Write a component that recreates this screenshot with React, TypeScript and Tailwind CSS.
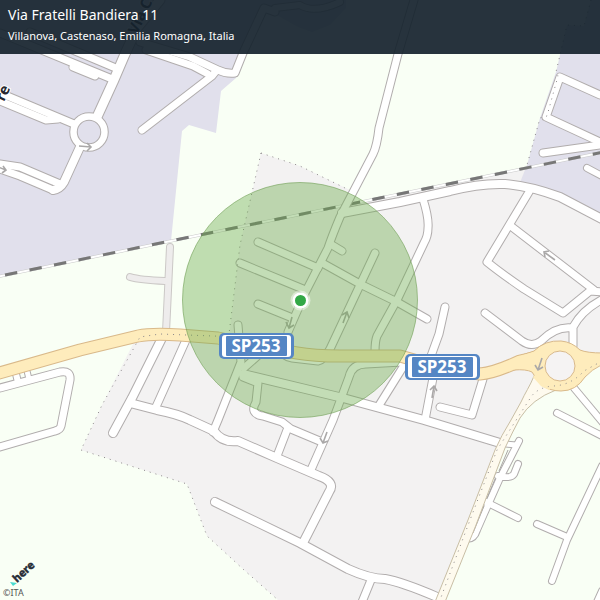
import React from "react";

type Road = { d: string; w?: number };

const streets: Road[] = [
  // north-west district
  { d: "M160 0 L137 28 L125 54 L113 82 L97 117", w: 9 },
  { d: "M0 93 L74 124", w: 7 },
  { d: "M0 101 L46 120 L58 119", w: 7 },
  { d: "M0 164 L20 167 L60 184", w: 7 },
  { d: "M0 169 L20 176 L53 190", w: 7 },
  { d: "M80 147 L64 182 Q60 189 53 190", w: 8 },
  { d: "M0 33 L112 79", w: 7 },
  { d: "M30 32 L118 69", w: 7 },
  { d: "M73 67 L95 76", w: 7 },
  { d: "M140 42 L190 57 L218 70 Q226 74 235 73 L243 53 L264 8 L275 12", w: 7 },
  { d: "M146 50 L193 66 L208 74", w: 7 },
  { d: "M216 71 L212 76 L142 130", w: 7 },
  { d: "M275 8 Q292 6 300 5 Q314 14 340 2", w: 6 },
  // north-east district
  { d: "M600 95 L560 77 L546 117 L600 142", w: 7 },
  { d: "M543 153 L600 145", w: 7 },
  { d: "M587 168 L602 176", w: 6 },
  { d: "M342 213 L400 202 L450 191 Q480 183 505 184 Q530 186 560 197 L602 219", w: 8 },
  { d: "M423 199 Q429 218 428 228 Q428 236 424 243 L398 298 L377 336 Q375 341 375 352", w: 7 },
  { d: "M529 192 L508 227 L487 262 Q502 274 524 289 L563 313 L590 291 L604 292", w: 7 },
  { d: "M512 227 L594 290", w: 7 },
  { d: "M485 313 L522 341 Q532 348 541 341 Q556 326 572 328", w: 7 },
  { d: "M573 346 L573 327 Q582 310 603 299", w: 7 },
  // town centre
  { d: "M414 0 L398 54 L379 128 Q377 146 373 154 L340 217 Q332 236 328 248 L305 293 L288 332", w: 7 },
  { d: "M258 242 L318 268", w: 7 },
  { d: "M324 264 L360 284 L397 302 L427 319", w: 7 },
  { d: "M240 263 L303 289", w: 7 },
  { d: "M258 304 L290 317", w: 7 },
  { d: "M332 245 L342 251", w: 7 },
  { d: "M375 253 L360 285 L330 349 Q324 360 318 361 L292 358 Q284 357 283 350", w: 7 },
  { d: "M238 325 L241 362 L218 420 L213 432", w: 7 },
  { d: "M262 352 L244 368", w: 7 },
  { d: "M243 374 L343 398 L424 420 L500 443", w: 8 },
  { d: "M243 377 L258 383 L256 402 Q249 414 263 416 L282 422 L291 429 L322 442", w: 7 },
  { d: "M402 362 L366 364 Q352 364 349 377 L333 420 L310 472", w: 7 },
  { d: "M403 367 L378 407", w: 7 },
  { d: "M445 307 L439 334 L431 356", w: 7 },
  { d: "M433 378 L425 420", w: 7 },
  { d: "M483 379 L472 415 L440 407", w: 7 },
  { d: "M162 338 L132 398 L113 433", w: 8 },
  { d: "M186 340 L160 398 L155 409", w: 7 },
  { d: "M130 403 L157 410 Q178 414 190 420 L214 431 Q222 443 238 441 L277 458 L319 476 Q336 482 329 492 L303 543", w: 8 },
  { d: "M287 430 L277 456", w: 7 },
  { d: "M215 502 L300 543 L348 569 Q370 579 385 579 Q402 582 437 597", w: 8 },
  { d: "M371 580 L362 602", w: 7 },
  // south-west loop
  { d: "M0 388 L60 372 Q71 370 70 380 L61 426 Q60 430 55 431 L0 447", w: 7 },
  { d: "M16 374 L18 382", w: 6 },
  { d: "M27 371 L29 379", w: 5 },
  // south-east lanes
  { d: "M519 441 L500 478 L484 514 L477 530 Q474 540 465 539", w: 6 },
  { d: "M518 464 L514 474 Q511 479 498 476", w: 6 },
  { d: "M486 502 L518 518", w: 6 },
  { d: "M506 444 L516 445", w: 5 },
  { d: "M537 524 L567 537", w: 6 },
  { d: "M602 466 L567 540 L552 581", w: 6 },
  { d: "M557 413 L604 437", w: 6 },
  { d: "M574 388 L604 424", w: 6 },
  { d: "M602 591 L597 602", w: 6 },
];

const serviceLanes: Road[] = [
  { d: "M170 247 L168 290 L166 332", w: 6 },
  { d: "M130 277 Q140 280 165 281", w: 6 },
];

const provincial =
  "M-4 374 L80 350 L138 336 Q152 333 180 335 L218 338 L262 347 L297 353 Q314 356 340 356 L400 356 L442 368 L480 374 Q494 373 520 361 L542 356";

const roundabout =
  "M516 357 L534 351 Q545 340 561 341 Q572 342 580 350 Q587 353 603 353 V364 Q591 370 585 377 Q576 391 561 391 Q549 391 540 384 L532 372 Q526 369 514 370";

const districtEdges = [
  "M261 153 L300 166 L347 189",
  "M261 153 L240 245 L229 334",
  "M240 337 L160 334 L140 337 L102 405 L81 450 L187 484 L207 536 L244 570 L278 600",
  "M591 0 L584 26 L567 25 L556 72 L558 76 L547 116 L540 118 L527 165",
  "M602 361 L584 371 Q570 386 552 386 Q537 388 531 397 L513 425 L497 450 L470 520 L440 600",
];

const arrows = [
  "M79 146 L91 147 M87 143 L91 147 L87 151",
  "M-2 167 L6 170 M3 166 L6 170 L2 173",
  "M292 317 L289 328 M286 322 L289 328 L294 325",
  "M343 323 L347 312 M342 315 L347 312 L349 318",
  "M327 432 L323 443 M320 438 L323 443 L328 441",
  "M432 398 L434 386 M430 390 L434 386 L437 391",
  "M555 260 L544 252 M549 251 L544 252 L545 257",
  "M542 358 L538 370 M535 365 L538 370 L543 367",
];

function RoadLayer({ roads, edge, fill }: { roads: Road[]; edge: string; fill: string }) {
  return (
    <g fill="none" strokeLinecap="round" strokeLinejoin="round">
      {roads.map((r) => (
        <path key={r.d} d={r.d} stroke={edge} strokeWidth={(r.w ?? 7) + 2} />
      ))}
      {roads.map((r) => (
        <path key={r.d} d={r.d} stroke={fill} strokeWidth={r.w ?? 7} />
      ))}
    </g>
  );
}

function RoadShield({ x, y, label }: { x: number; y: number; label: string }) {
  return (
    <g>
      <rect x={x - 37} y={y - 13} width="75" height="26" rx="5" fill="#5586c4" />
      <rect x={x - 34} y={y - 11} width="69" height="22" rx="3" fill="#fff" />
      <rect x={x - 30} y={y - 10} width="61" height="20" rx="1" fill="#5586c4" />
      <text x={x} y={y + 6} textAnchor="middle" fill="#fff" className="font-['Noto_Sans',sans-serif] text-[17px] font-bold">
        {label}
      </text>
    </g>
  );
}

function StreetMap() {
  return (
    <svg viewBox="0 0 600 600" className="block h-auto w-full" role="img" aria-label="Via Fratelli Bandiera 11">
      <rect width="600" height="600" fill="#f9fff5" />
      <path d="M0 0 H346 V8 L330 25 L312 32 L298 27 L275 14 L264 12 L236 78 L221 91 L216 133 L189 125 L182 131 L171 241 L0 276 Z" fill="#e1e0ec" />
      <path d="M261 153 L300 166 L350 190 L356 203 L522 168 L600 185 V362 H580 L530 397 L497 450 L440 600 H278 L244 570 L207 536 L187 484 L81 450 L102 405 L135 340 L229 337 L240 245 Z" fill="#f3f2f2" />
      <path d="M591 0 L584 26 L567 25 L556 72 L540 118 L527 165 L519 185 L560 195 L600 217 V0 Z" fill="#e1e0ec" />

      <RoadLayer roads={serviceLanes} edge="#cbc8c6" fill="#eeecec" />

      <path d="M-4 277 L604 152" stroke="#c9c9c9" strokeWidth="3" />
      <path d="M-4 277 L604 152" stroke="#fff" strokeWidth="2" />
      <path d="M5 275 L604 152" stroke="#777" strokeWidth="3" strokeDasharray="12.5 12.5" />

      <circle cx="89" cy="132" r="15.5" fill="none" stroke="#b1adad" strokeWidth="8.5" />
      <RoadLayer roads={streets} edge="#b1adad" fill="#fff" />
      <circle cx="89" cy="132" r="15.5" fill="none" stroke="#fff" strokeWidth="6.5" />
      <path d="M508 450 L499 471 M495 479 L487 498 M484 506 L473 533" stroke="#aaa6a6" strokeWidth="1" />

      <path d="M534 376 C530 386 525 393 521 402 L511 420 Q501 436 495 450 L468 520 L435 602 L445 602 L476 525 L505 448 Q513 431 520 418 Q532 399 556 390 L541 365 Z" fill="#fefaee" stroke="#c8bea5" strokeWidth="1" />

      <g fill="none" strokeLinejoin="round">
        <path d={provincial} stroke="#d9b98a" strokeWidth="13" />
        <path d={roundabout} fill="#feecbc" stroke="#d9b98a" />
        <path d={provincial} stroke="#feecbc" strokeWidth="11" />
        <path d="M534 376 L542 385 L550 389" stroke="#feecbc" strokeWidth="3" />
      </g>
      <circle cx="560" cy="366" r="15" fill="#f5f3f3" stroke="#d9b98a" />

      <g fill="none" stroke="#8b8789" strokeWidth="1" strokeDasharray="1 5">
        {districtEdges.map((d) => (
          <path key={d} d={d} />
        ))}
      </g>

      <g fill="none" stroke="#aaa8a8" strokeWidth="1.6">
        {arrows.map((d) => (
          <path key={d} d={d} />
        ))}
      </g>

      <g fill="#26282f" stroke="#fff" strokeWidth="2" paintOrder="stroke" className="font-['Noto_Sans',sans-serif] text-[15px] font-bold">
        <text transform="translate(137 35) rotate(-65)">Via C</text>
        <text transform="translate(4 102) rotate(-65)">re</text>
      </g>

      <circle cx="300" cy="300" r="117.5" fill="#6aaa48" fillOpacity="0.4" stroke="#6f9f55" strokeOpacity="0.6" />

      <RoadShield x={256} y={346} label="SP253" />
      <RoadShield x={442} y={367} label="SP253" />

      <circle cx="300.5" cy="300.5" r="10" fill="#fff" fillOpacity="0.45" />
      <circle cx="300.5" cy="300.5" r="8" fill="#fff" />
      <circle cx="300.5" cy="300.5" r="5.5" fill="#32a846" />

      <text transform="translate(17 583) rotate(-43)" fill="#272d37" stroke="#272d37" strokeWidth="0.5" className="font-['Noto_Sans',sans-serif] text-[11px] font-bold">
        here
      </text>
      <path d="M10 582 L17 583 L13 586 Z" fill="#48dad0" />
      <text x="3" y="596" fill="#555" className="font-['Noto_Sans',sans-serif] text-[9px]">
        ©ITA
      </text>
    </svg>
  );
}

export default function App() {
  return (
    <main className="relative w-full overflow-hidden bg-[#f9fff5]">
      <StreetMap />
      <header className="absolute inset-x-0 top-0 bg-[#15222d]/92 px-2 pt-1 pb-2 font-['Noto_Sans',sans-serif] text-white">
        <h1 className="text-sm leading-[22px]">Via Fratelli Bandiera 11</h1>
        <p className="text-[11px] leading-5">Villanova, Castenaso, Emilia Romagna, Italia</p>
      </header>
    </main>
  );
}
